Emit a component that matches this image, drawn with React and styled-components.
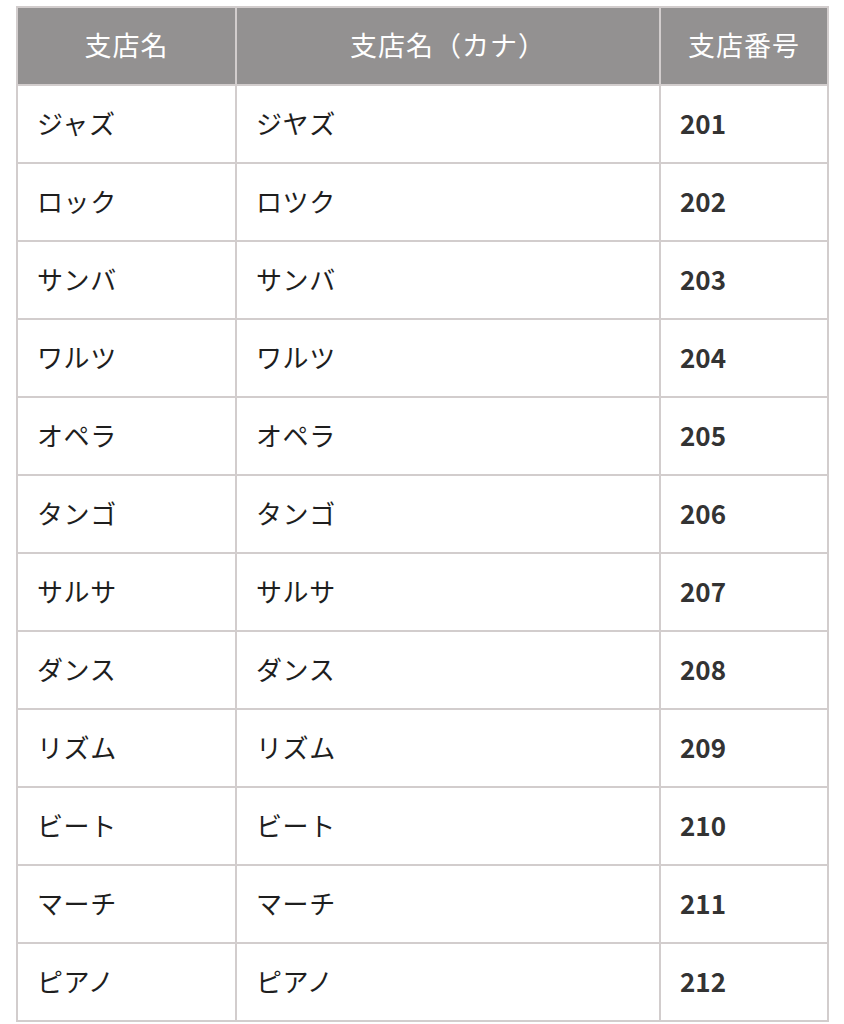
import React from 'react';
import styled, { createGlobalStyle } from 'styled-components';

const GlobalStyle = createGlobalStyle`
  html, body {
    margin: 0;
    padding: 0;
    background: #ffffff;
  }
  body {
    font-family: "Noto Sans CJK JP", "Noto Sans", sans-serif;
    color: #222222;
  }
`;

const Page = styled.div`
  padding: 6px 0 0 16px;
`;

const Table = styled.table`
  border-collapse: collapse;
  table-layout: fixed;
`;

const HeadCell = styled.th`
  width: ${(props) => props.width}px;
  height: 73px;
  padding: 0 0 3px;
  background: #939191;
  border: 2px solid #d2cdcd;
  color: #ffffff;
  font-size: 27px;
  font-weight: 400;
  text-align: center;
  letter-spacing: 1px;
`;

const Row = styled.tr`
  height: 78px;
`;

const Cell = styled.td`
  padding: 0 0 3px 19px;
  border: 2px solid #d2cdcd;
  font-size: 26px;
  font-weight: ${(props) => (props.bold ? 700 : 400)};
  color: ${(props) => (props.bold ? '#333333' : '#1e1e1e')};
  letter-spacing: ${(props) => (props.bold ? '0' : '0.6px')};
  white-space: nowrap;
`;

const branches = [
  ['ジャズ', 'ジヤズ', 201],
  ['ロック', 'ロツク', 202],
  ['サンバ', 'サンバ', 203],
  ['ワルツ', 'ワルツ', 204],
  ['オペラ', 'オペラ', 205],
  ['タンゴ', 'タンゴ', 206],
  ['サルサ', 'サルサ', 207],
  ['ダンス', 'ダンス', 208],
  ['リズム', 'リズム', 209],
  ['ビート', 'ビート', 210],
  ['マーチ', 'マーチ', 211],
  ['ピアノ', 'ピアノ', 212],
];

export default function App() {
  return (
    <Page>
      <GlobalStyle />
      <Table>
        <thead>
          <tr>
            <HeadCell width={217}>支店名</HeadCell>
            <HeadCell width={422}>支店名（カナ）</HeadCell>
            <HeadCell width={166}>支店番号</HeadCell>
          </tr>
        </thead>
        <tbody>
          {branches.map(([name, kana, code]) => (
            <Row key={code}>
              <Cell>{name}</Cell>
              <Cell>{kana}</Cell>
              <Cell bold>{code}</Cell>
            </Row>
          ))}
        </tbody>
      </Table>
    </Page>
  );
}
